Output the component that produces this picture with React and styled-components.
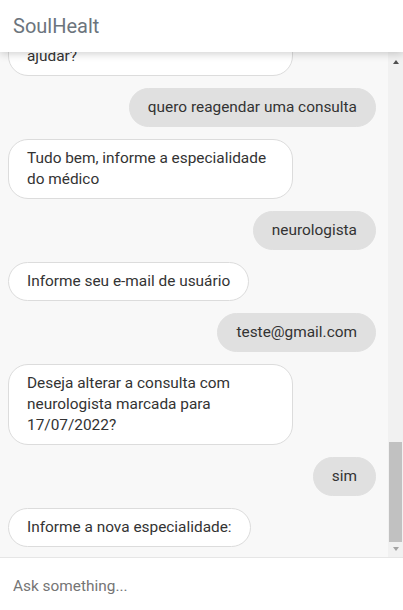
import React from "react";
import styled, { createGlobalStyle } from "styled-components";

const GlobalStyle = createGlobalStyle`
  html, body, #root {
    margin: 0;
    height: 100%;
  }
  body {
    font-family: Roboto, "Liberation Sans", sans-serif;
    background: #fff;
  }
`;

const Page = styled.div`
  display: flex;
  flex-direction: column;
  height: 100vh;
`;

const Header = styled.header`
  height: 52px;
  display: flex;
  align-items: center;
  padding: 0 13px;
  background: #fff;
  box-shadow: 0 2px 8px rgba(0, 0, 0, 0.18);
  position: relative;
  z-index: 2;
  flex-shrink: 0;
`;

const Title = styled.h1`
  margin: 0;
  font-size: 20px;
  font-weight: 400;
  color: #6c757d;
`;

const ChatArea = styled.div`
  flex: 1;
  min-height: 0;
  display: flex;
  background: #f8f8f8;
  border-bottom: 1px solid #e6e6e6;
`;

// column-reverse keeps the newest messages pinned to the bottom
const Messages = styled.div`
  flex: 1;
  overflow: hidden;
  display: flex;
  flex-direction: column-reverse;
`;

const List = styled.div`
  display: flex;
  flex-direction: column;
  gap: 12px;
  padding: 12px 12px 10px 8px;
`;

const Bubble = styled.div`
  align-self: ${(p) => (p.$user ? "flex-end" : "flex-start")};
  max-width: 285px;
  box-sizing: border-box;
  padding: 8px 18px;
  font-size: 15.4px;
  line-height: 21px;
  color: #333;
  background: ${(p) => (p.$user ? "#e0e0e0" : "#fff")};
  border: 1px solid ${(p) => (p.$user ? "#e0e0e0" : "#dcdcdc")};
  border-radius: 20px;
`;

const ScrollTrack = styled.div`
  width: 15px;
  flex-shrink: 0;
  display: flex;
  flex-direction: column;
  background: #f1f1f1;
`;

const ScrollButton = styled.div`
  height: 15px;
  flex-shrink: 0;
  display: flex;
  justify-content: center;
  align-items: ${(p) => (p.$down ? "flex-start" : "flex-end")};
  box-sizing: border-box;
  padding: ${(p) => (p.$down ? "5px 0 0" : "0 0 3px")};
`;

const Arrow = styled.div`
  width: 0;
  height: 0;
  border-left: 3.5px solid transparent;
  border-right: 3.5px solid transparent;
  ${(p) =>
    p.$down
      ? "border-top: 4px solid #a3a3a3;"
      : "border-bottom: 4px solid #505050;"}
`;

const ScrollRail = styled.div`
  flex: 1;
  display: flex;
  flex-direction: column;
  justify-content: flex-end;
`;

const Thumb = styled.div`
  height: 100px;
  margin: 0 1px 0 1px;
  background: #c1c1c1;
`;

const InputBar = styled.form`
  height: 52px;
  display: flex;
  align-items: center;
  flex-shrink: 0;
  background: #fff;
`;

const Input = styled.input`
  flex: 1;
  border: none;
  outline: none;
  padding: 4px 13px 0;
  height: 100%;
  font-family: inherit;
  font-size: 15.4px;
  color: #333;
  background: transparent;

  &::placeholder {
    color: #757575;
  }
`;

const messages = [
  { user: true, text: "marcar uma consulta" },
  { user: false, text: "Tudo bem, informe a especialidade do médico" },
  { user: true, text: "neurologista" },
  { user: false, text: "Informe seu e-mail de usuário" },
  { user: true, text: "teste@gmail.com" },
  { user: false, text: "Consulta com neurologista marcada para 17/07/2022." },
  { user: true, text: "oi" },
  {
    user: false,
    text: "Olá, eu sou a assistente virtual da SoulHealt. Como eu posso te ajudar?",
  },
  { user: true, text: "quero reagendar uma consulta" },
  { user: false, text: "Tudo bem, informe a especialidade do médico" },
  { user: true, text: "neurologista" },
  { user: false, text: "Informe seu e-mail de usuário" },
  { user: true, text: "teste@gmail.com" },
  {
    user: false,
    text: "Deseja alterar a consulta com neurologista marcada para 17/07/2022?",
  },
  { user: true, text: "sim" },
  { user: false, text: "Informe a nova especialidade:" },
];

export default function App() {
  return (
    <Page>
      <GlobalStyle />
      <Header>
        <Title>SoulHealt</Title>
      </Header>
      <ChatArea>
        <Messages>
          <List>
            {messages.map((m, i) => (
              <Bubble key={i} $user={m.user}>
                {m.text}
              </Bubble>
            ))}
          </List>
        </Messages>
        <ScrollTrack>
          <ScrollButton>
            <Arrow />
          </ScrollButton>
          <ScrollRail>
            <Thumb />
          </ScrollRail>
          <ScrollButton $down>
            <Arrow $down />
          </ScrollButton>
        </ScrollTrack>
      </ChatArea>
      <InputBar onSubmit={(e) => e.preventDefault()}>
        <Input placeholder="Ask something..." />
      </InputBar>
    </Page>
  );
}
